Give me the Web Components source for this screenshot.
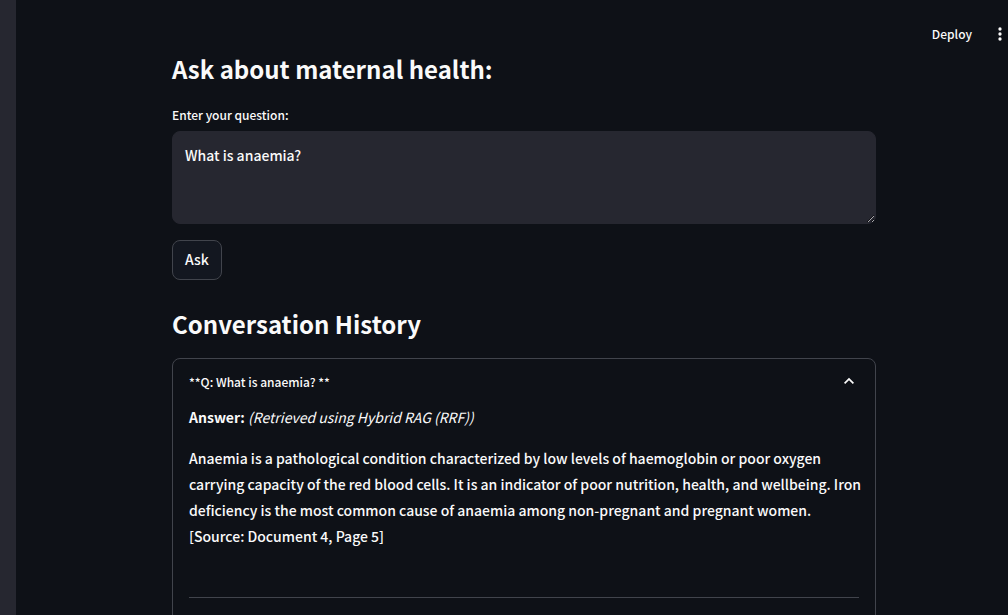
<!DOCTYPE html>
<html lang="en">
<head>
<meta charset="utf-8">
<meta name="viewport" content="width=device-width, initial-scale=1">
<title>Maternal health</title>
<style>
  body { margin: 0; background: #0e1117; color: #fafafa; color-scheme: dark; font-family: "Noto Sans CJK SC", "Noto Sans", sans-serif; font-weight: 500; }
</style>
</head>
<body>
<health-app>
  <app-toolbar slot="toolbar"></app-toolbar>
  <section-title>Ask about maternal health:</section-title>
  <question-form label="Enter your question:" value="What is anaemia?"></question-form>
  <section-title>Conversation History</section-title>
  <history-entry>
    <span slot="question">**Q: What is anaemia? **</span>
    <answer-text>
      <span slot="method">(Retrieved using Hybrid RAG (RRF))</span>
      Anaemia is a pathological condition characterized by low levels of haemoglobin or poor oxygen carrying capacity of the red blood cells. It is an indicator of poor nutrition, health, and wellbeing. Iron deficiency is the most common cause of anaemia among non-pregnant and pregnant women.<br>
      [Source: Document 4, Page 5]
    </answer-text>
  </history-entry>
</health-app>
<script>
const define = (name, html, setup) => {
  const template = document.createElement('template');
  template.innerHTML = html;
  customElements.define(name, class extends HTMLElement {
    constructor() {
      super();
      this.attachShadow({ mode: 'open' }).append(template.content.cloneNode(true));
    }
    connectedCallback() { if (setup) setup(this, this.shadowRoot); }
  });
};

define('health-app', `
  <style>
    :host { display: flex; height: 100vh; }
    aside { flex: none; width: 16px; background: #262730; }
    .view { flex: 1; min-width: 0; overflow: auto; scrollbar-width: none; }
    main { max-width: 704px; margin: 0 auto; padding: 0 16px 96px 40px; }
  </style>
  <aside aria-label="Sidebar"></aside>
  <div class="view">
    <slot name="toolbar"></slot>
    <main><slot></slot></main>
  </div>`);

define('app-toolbar', `
  <style>
    :host { display: flex; justify-content: flex-end; align-items: center; gap: 20px; padding-top: 20px; height: 28px; }
    button { border: 0; padding: 0; background: none; color: inherit; font-family: inherit; font-weight: inherit; font-size: 12px; line-height: 20px; cursor: pointer; }
    .menu { display: flex; width: 16px; height: 20px; align-items: center; justify-content: center; }
    svg { flex: none; display: block; fill: currentColor; }
  </style>
  <button type="button">Deploy</button>
  <button type="button" class="menu" aria-label="Main menu">
    <svg width="20" height="20" viewBox="0 0 24 24"><circle cx="12" cy="6" r="2"/><circle cx="12" cy="12" r="2"/><circle cx="12" cy="18" r="2"/></svg>
  </button>`);

define('section-title', `
  <style>
    :host { display: block; }
    h2 { margin: 0; padding: 5px 0 18px; font-size: 24px; line-height: 32px; font-weight: 600; }
  </style>
  <h2><slot></slot></h2>`);

define('question-form', `
  <style>
    :host { display: block; padding-bottom: 23px; }
    form { display: flex; flex-direction: column; align-items: flex-start; }
    label { font-size: 12px; line-height: 24px; margin-bottom: 4px; }
    textarea { box-sizing: border-box; width: 100%; height: 93px; margin: 0 0 16px; padding: 11px 12px; border: 1px solid #262730; border-radius: 8px; background: #262730; color: inherit; font-family: inherit; font-weight: inherit; font-size: 14px; line-height: 24px; resize: vertical; outline: none; }
    button { height: 40px; padding: 0 12px 2px; border: 1px solid #41444c; border-radius: 8px; background: #131720; color: inherit; font-family: inherit; font-weight: inherit; font-size: 14px; line-height: 24px; cursor: pointer; }
  </style>
  <form>
    <label for="question"></label>
    <textarea id="question"></textarea>
    <button type="button">Ask</button>
  </form>`, (host, root) => {
    root.querySelector('label').textContent = host.getAttribute('label');
    root.querySelector('textarea').value = host.getAttribute('value');
  });

define('history-entry', `
  <style>
    :host { display: block; }
    details { border: 1px solid #41444c; border-radius: 8px; }
    summary { display: flex; justify-content: space-between; align-items: center; padding: 12px 16px 11px; font-size: 12px; line-height: 22px; list-style: none; cursor: pointer; }
    svg { flex: none; display: block; }
    details:not([open]) svg { transform: rotate(180deg); }
    .content { padding: 0 12px 16px 16px; }
  </style>
  <details open>
    <summary>
      <slot name="question"></slot>
      <svg width="20" height="20" viewBox="0 0 24 24" fill="currentColor" aria-hidden="true"><path d="M12 7l-6 6 1.41 1.41L12 9.83l4.59 4.58L18 13z"/></svg>
    </summary>
    <div class="content"><slot></slot></div>
  </details>`);

define('answer-text', `
  <style>
    :host { display: block; font-size: 14px; line-height: 26px; }
    p { margin: 0 0 15px; }
    em { font-weight: 400; }
    hr { margin: 48px 4px 32px 0; border: 0; border-top: 1px solid #41444c; }
  </style>
  <p><strong>Answer:</strong> <em><slot name="method"></slot></em></p>
  <p><slot></slot></p>
  <hr>`);
</script>
</body>
</html>
